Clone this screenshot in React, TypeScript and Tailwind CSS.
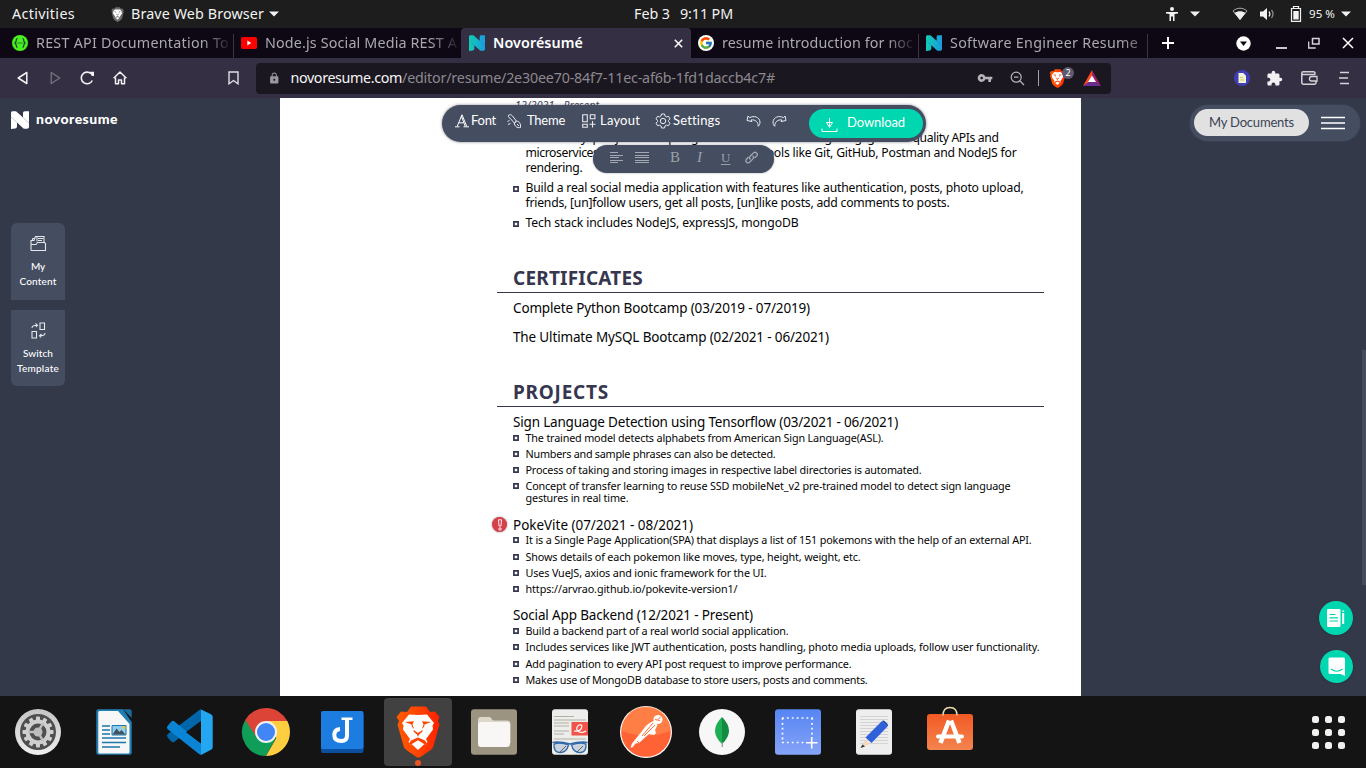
import { useLayoutEffect, useRef, useState } from "react";
import type { ReactNode } from "react";
import { FcGoogle } from "react-icons/fc";
import { MdVpnKey, MdExtension, MdLock } from "react-icons/md";

/* Single line of text tracked so that it spans exactly `w` pixels. */
function Fit({ w, children, className = "" }: { w: number; children: string; className?: string }) {
  const ref = useRef<HTMLSpanElement>(null);
  const [spacing, setSpacing] = useState(0);
  useLayoutEffect(() => {
    const el = ref.current;
    if (!el) return;
    el.style.letterSpacing = "0px";
    const natural = el.getBoundingClientRect().width;
    const next = (w - natural) / children.length;
    el.style.letterSpacing = `${next}px`;
    setSpacing(next);
  }, [w, children]);
  return (
    <span ref={ref} className={`inline-block shrink-0 whitespace-pre ${className}`} style={{ letterSpacing: spacing }}>
      {children}
    </span>
  );
}

function Caret() {
  return (
    <svg width="10" height="6" viewBox="0 0 10 6" className="shrink-0">
      <path d="M0 .5h10L5 5.5z" fill="#f2f2f2" />
    </svg>
  );
}

function Lion({ size, mono = false }: { size: number; mono?: boolean }) {
  return (
    <svg width={size} height={size} viewBox="0 0 52 52" className="shrink-0">
      <defs>
        <linearGradient id="lionGrad" x1="0" x2="1">
          <stop offset="0" stopColor="#ff5a00" />
          <stop offset=".5" stopColor="#ff4500" />
          <stop offset="1" stopColor="#ff2000" />
        </linearGradient>
      </defs>
      <path d="M15 6l4-5.500h15l4 5.500 5-.5 4.500 5.500-1.500 4 1.500 3.500-6 21.500c-1 3-3 4-5 5.500l-8 5.500c-1.500.8-2.500.8-4 0l-8-5.500c-2-1.500-4-2.500-5-5.500L5.500 18.500 7 15l-2.500-4L9 5.500z" fill={mono ? "#6a6a6a" : "url(#lionGrad)"} />
      <path d="M26 9l9-.5 7 8.500-1.500 2.500.5 4-7 9.500 1.500 3-2 2.500-4-2-3.500-1.500-3.500 1.500-4 2-2-2.500 1.500-3-7-9.500.5-4L10 17l7-8.500z" fill="#fff" />
      <path d="M13 16l9-.8-1.500 3 1.500 6 4 2.800 4-2.800 1.500-6-1.500-3 9 .8-6.500 2.500-.5 3-2-.5.5 4.500-3.500 3-1 2.500-1-2.500-3.500-3 .5-4.500-2 .5-.5-3z" fill={mono ? "#777" : "#ff4200"} />
      <path d="M26 33.500l7 4-7 6.500-7-6.500z" fill="#fff" />
      <path d="M17 37.500l2-3 7-3 7 3 2 3-2 1-7-4.200-7 4.200z" fill={mono ? "#777" : "#ff4200"} />
    </svg>
  );
}

function NLogo({ size, white = false }: { size: number; white?: boolean }) {
  return (
    <svg width={size} height={size} viewBox="0 0 18 18" className="shrink-0">
      <defs>
        <linearGradient id="nGrad" x1="0" x2="1">
          <stop offset="0" stopColor="#12cdb2" />
          <stop offset="1" stopColor="#1a9be0" />
        </linearGradient>
      </defs>
      <path
        d="M0 2C0 .6 1 .2 2.200.2h2.800L12 6.500V2.200C12 1 12.600.3 14 .3h4v15.400c0 1.300-.8 2-2 2h-3.200L6 11.500v3.700c0 1.200-.6 2-1.800 2.200L0 18z"
        fill={white ? "#fff" : "url(#nGrad)"}
      />
      <path d="M0 6l6 5.500M12 6.500l6 5.500" stroke={white ? "#8c93a3" : "#1683c8"} strokeWidth=".5" />
    </svg>
  );
}

function TopBar() {
  return (
    <div className="flex h-7 shrink-0 items-center bg-[#1d1d1d] pl-3 text-[14.3px] leading-7 text-[#f2f2f2]">
      <div className="w-[98px]"><Fit w={63}>Activities</Fit></div>
      <Lion size={15} mono />
      <div className="ml-1.5 w-[138px]"><Fit w={133}>Brave Web Browser</Fit></div>
      <Caret />
      <div className="ml-[355px] w-[46px]"><Fit w={36}>Feb 3</Fit></div>
      <Fit w={53}>9:11 PM</Fit>
      <svg width="14" height="16" viewBox="0 0 14 16" className="ml-[432px] shrink-0">
        <circle cx="7" cy="3" r="2" fill="#f2f2f2" />
        <path d="M1 6h12v1.500L9.500 8v7H8v-4.500H6V15H4.500V8L1 7.500z" fill="#f2f2f2" />
      </svg>
      <div className="flex pl-[11px]"><Caret /></div>
      <svg width="16" height="14" viewBox="0 0 16 14" className="ml-8 shrink-0">
        <path d="M1 4C5 .3 11 .3 15 4L8 12.500z" fill="none" stroke="#aaa" />
        <path d="M2.500 6c3.500-2.500 7.500-2.500 11 0L8 13z" fill="#f2f2f2" />
      </svg>
      <svg width="16" height="14" viewBox="0 0 16 14" className="ml-3 shrink-0">
        <path d="M0 4.500h3L7 1v12L3 9.500H0z" fill="#f2f2f2" />
        <path d="M9 4.500q1.700 2.500 0 5" stroke="#f2f2f2" fill="none" strokeWidth="1.300" />
        <path d="M11.500 3q3 4 0 8" stroke="#888" fill="none" strokeWidth="1.300" />
      </svg>
      <svg width="12" height="16" viewBox="0 0 12 16" className="ml-3.5 shrink-0">
        <path d="M3.500 2V.5h5V2M1.500 2.500h9v12.800h-9z" fill="none" stroke="#f2f2f2" strokeWidth="1.200" />
        <path d="M3.300 5h5.400v8.500H3.300z" fill="#f2f2f2" />
      </svg>
      <div className="ml-[7px] w-[32px] text-[11.5px]"><Fit w={26}>95 %</Fit></div>
      <Caret />
    </div>
  );
}

const FADE = "overflow-hidden [mask-image:linear-gradient(to_right,black_86%,rgba(0,0,0,0.12)_100%)]";

function TabStrip() {
  return (
    <div className="flex h-[30px] shrink-0 bg-[#0e0814] text-[14.3px] leading-[30px] text-[#aba9af]">
      <div className="flex w-[234px] items-center pl-3">
        <svg width="16" height="16" viewBox="0 0 16 16" className="shrink-0">
          <circle cx="8" cy="8" r="8" fill="#49f01c" />
          <path d="M5.500 3.500C3.500 3.500 5 7 3 8c2 1 .5 4.500 2.500 4.500M10.500 3.500c2 0 .5 3.500 2.500 4.500-2 1-.5 4.500-2.500 4.500" fill="none" stroke="#173647" strokeWidth="1.200" />
          <path d="M5.500 8h5" stroke="#173647" strokeWidth="1.200" strokeDasharray="1.200 .8" />
        </svg>
        <div className={`ml-2 h-[30px] w-[193px] ${FADE}`}><Fit w={193}>REST API Documentation To</Fit></div>
        <div className="ml-auto h-6 w-px self-end bg-[#3a3541]" />
      </div>
      <div className="flex w-[227px] items-center pl-[7px]">
        <svg width="16" height="12" viewBox="0 0 16 12" className="shrink-0">
          <rect width="16" height="12" rx="2" fill="#f00" />
          <path d="M6.300 3.500v5l4-2.500z" fill="#fff" />
        </svg>
        <div className={`ml-2 h-[30px] w-[192px] ${FADE}`}><Fit w={192}>Node.js Social Media REST A</Fit></div>
      </div>
      <div className="flex w-[230px] items-center rounded-t bg-[#352f44] pl-2 text-white">
        <NLogo size={16} />
        <div className="ml-2 font-semibold"><Fit w={90}>Novorésumé</Fit></div>
        <svg width="9" height="9" viewBox="0 0 9 9" className="mr-2 ml-auto">
          <path d="M.8.8l7.400 7.400M8.200.8L.8 8.200" stroke="#fff" strokeWidth="1.500" />
        </svg>
      </div>
      <div className="flex w-[228px] items-center pl-[7px]">
        <div className="flex size-4 items-center justify-center rounded-full bg-white"><FcGoogle size={14} /></div>
        <div className={`ml-2 h-[30px] w-[191px] ${FADE}`}><Fit w={191}>resume introduction for noc</Fit></div>
        <div className="ml-auto h-6 w-px self-end bg-[#3a3541]" />
      </div>
      <div className="flex w-[229px] items-center pl-[7px]">
        <NLogo size={16} />
        <div className="ml-2 h-[30px] w-[188px] overflow-hidden [mask-image:linear-gradient(to_right,black_90%,rgba(0,0,0,0.6)_100%)]"><Fit w={188}>Software Engineer Resume</Fit></div>
        <div className="ml-auto h-6 w-px self-end bg-[#3a3541]" />
      </div>
      <div className="flex flex-1 items-center">
        <svg width="12" height="12" viewBox="0 0 12 12" className="ml-3.5">
          <path d="M6 0v12M0 6h12" stroke="#fff" strokeWidth="2" />
        </svg>
        <svg width="15" height="15" viewBox="0 0 15 15" className="ml-[62px]">
          <circle cx="7.500" cy="7.500" r="7.200" fill="#fff" />
          <path d="M4 5.500h7l-3.500 4.500z" fill="#0e0814" />
        </svg>
        <svg width="11" height="12" viewBox="0 0 11 12" className="ml-[25px]"><path d="M0 11h11" stroke="#c9c7cc" strokeWidth="2" /></svg>
        <svg width="12" height="12" viewBox="0 0 12 12" className="ml-[21px]">
          <path d="M4.500 1.500h6.500v5.500H4.500z" fill="none" stroke="#d5d3d8" strokeWidth="1.500" />
          <path d="M.7 4.500v6.500h7" fill="none" stroke="#d5d3d8" strokeWidth="1.300" />
        </svg>
        <svg width="12" height="12" viewBox="0 0 12 12" className="ml-[22px]"><path d="M1 1l10 10M11 1L1 11" stroke="#fff" strokeWidth="1.500" /></svg>
      </div>
    </div>
  );
}

function AddressBar() {
  return (
    <div className="flex h-10 shrink-0 items-center bg-[#352f44] pl-[17px]">
      <svg width="11" height="14" viewBox="0 0 11 14"><path d="M9.800 1.500v11L1.200 7z" fill="none" stroke="#f1f0f3" strokeWidth="1.500" strokeLinejoin="round" /></svg>
      <svg width="11" height="14" viewBox="0 0 11 14" className="ml-[22px]"><path d="M1.200 1.500v11L9.800 7z" fill="none" stroke="#77727f" strokeWidth="1.300" strokeLinejoin="round" /></svg>
      <svg width="15" height="14" viewBox="0 0 15 14" className="ml-[19px]">
        <path d="M12.300 9.500A5.800 5.800 0 1 1 11 2.600" fill="none" stroke="#f1f0f3" strokeWidth="1.600" />
        <path d="M9.500.8l4.500 0v4.200l-2.200 0z" fill="#f1f0f3" />
      </svg>
      <svg width="14" height="14" viewBox="0 0 14 14" className="ml-[18px]">
        <path d="M.6 7.300L7 1l6.400 6.300M2.500 6.500v6.300h3V9h3v3.800h3V6.500" fill="none" stroke="#f1f0f3" strokeWidth="1.500" strokeLinejoin="round" />
      </svg>
      <svg width="11" height="14" viewBox="0 0 11 14" className="ml-[101px]"><path d="M1 1h9v11.800L5.500 9.500 1 12.800z" fill="none" stroke="#e0dee3" strokeWidth="1.400" /></svg>
      <div className="ml-[17px] flex h-[31px] w-[855px] items-center rounded bg-[#1b1720] pl-3 text-[14.3px]">
        <MdLock size={12.500} color="#9a989e" />
        <div className="ml-[10px] flex text-[#8b898f]">
          <Fit w={111.500} className="text-[#f5f5f5]">novoresume.com</Fit>
          <Fit w={373}>/editor/resume/2e30ee70-84f7-11ec-af6b-1fd1daccb4c7#</Fit>
        </div>
        <div className="ml-[202px]"><MdVpnKey size={16} color="#b5b3b9" /></div>
        <svg width="15" height="15" viewBox="0 0 15 15" className="ml-[17px]">
          <circle cx="6.200" cy="6.200" r="5" fill="none" stroke="#b5b3b9" strokeWidth="1.200" />
          <path d="M9.800 9.800L14 14M4 6.200h4.400" stroke="#b5b3b9" strokeWidth="1.300" />
        </svg>
        <div className="ml-[13px] h-4 w-px bg-[#a5a2aa]" />
        <div className="relative ml-[9px] flex w-[26px]">
          <Lion size={19} />
          <span className="absolute -top-0.5 left-[14px] flex size-3 items-center justify-center rounded-full bg-[#5d5a70] text-[9px] leading-none text-white">2</span>
        </div>
        <svg width="18" height="16" viewBox="0 0 18 16" className="ml-[9px]">
          <path d="M9 0L0 16l9-5z" fill="#ff4724" />
          <path d="M9 0l9 16-9-5z" fill="#9e1f63" />
          <path d="M0 16h18l-9-6z" fill="#662d91" />
          <path d="M9 5.500l4 6.500H5z" fill="#fff" />
        </svg>
      </div>
      <svg width="16" height="16" viewBox="0 0 16 16" className="ml-[123px]">
        <circle cx="8" cy="8" r="8" fill="#403eb5" />
        <path d="M4.500 3h4.800L12 5.700V13H4.500z" fill="#f4f3d8" />
        <path d="M6 7.500h3M6 10h4.500" stroke="#c8cf4a" strokeWidth="1.200" />
      </svg>
      <div className="ml-[16px]"><MdExtension size={17} color="#f1f0f3" /></div>
      <svg width="17" height="14" viewBox="0 0 17 14" className="ml-[18px]">
        <path d="M14 3.500V2.200c0-.8-.5-1.400-1.400-1.400H2.200C1.300.8.800 1.400.8 2.200v9.600c0 .9.600 1.400 1.400 1.400h11.400c.8 0 1.400-.5 1.400-1.400V10M1 3.600h13.300" fill="none" stroke="#d5d3d8" strokeWidth="1.500" />
        <path d="M16 5.500h-5.300a1.800 1.800 0 0 0 0 4.500H16z" fill="none" stroke="#d5d3d8" strokeWidth="1.300" />
      </svg>
      <svg width="10" height="14" viewBox="0 0 10 14" className="ml-[21px]"><path d="M1 1.500h9M0 7h9M1 12.500h9" stroke="#d5d3d8" strokeWidth="1.300" /></svg>
    </div>
  );
}

function Sidebar() {
  return (
    <aside className="w-[280px] shrink-0 bg-[#333949] pt-[13px] pl-[11px] font-[Lato,sans-serif] text-[10px] leading-[15px] font-medium text-white">
      <div className="flex h-[18px] items-center gap-[7px]">
        <NLogo size={18} white />
        <div className="-mt-[3px] text-[14px] font-black"><Fit w={82}>novoresume</Fit></div>
      </div>
      <div className="mt-[94px] flex h-[77px] w-[54px] flex-col items-center rounded-t-md bg-[#454d61] pt-3">
        <svg width="17" height="17" viewBox="0 0 17 17" className="mb-[7px]">
          <path d="M1 15.500V5.500h3l1.500-4h8.500V7M1 15.500h14.500v-7l-1-1h-7L6 9.500H1" fill="none" stroke="#e4e6ea" strokeWidth="1.100" />
          <path d="M7 1.500v5M8 3.500h5M8 5.500h4M2.500 5V3.500h2" stroke="#e4e6ea" strokeWidth="1" fill="none" />
        </svg>
        <Fit w={14}>My</Fit>
        <Fit w={37}>Content</Fit>
      </div>
      <div className="mt-2.5 flex h-[76px] w-[54px] flex-col items-center rounded-b-md bg-[#454d61] pt-3">
        <svg width="15" height="17" viewBox="0 0 15 17" className="mb-[7px]">
          <path d="M9 1h4.500v6.500H9zM1 9.500h4.500V16H1zM1 6c0-2.500 2-2.800 5-2.800M4.500 1.500L6.500 3.200 5 5M14 11c0 2.500-2 2.800-5 2.800M10.500 12l-2 1.800 1.500 1.700" fill="none" stroke="#e4e6ea" strokeWidth="1.100" />
        </svg>
        <Fit w={30}>Switch</Fit>
        <Fit w={42}>Template</Fit>
      </div>
    </aside>
  );
}

function Bullet({ lines, big = false, className }: { lines: [number, string][]; big?: boolean; className: string }) {
  return (
    <li className={`flex gap-1.5 ${className}`}>
      <svg width="6" height="6" viewBox="0 0 6 6" className={`shrink-0 ${big ? "mt-[6px]" : "mt-[3px]"}`}>
        <path d="M.9.9h4.200v4.200H.9z" fill="#fff" stroke="#36364f" strokeWidth="1.700" />
      </svg>
      <div className={`ml-[.5px] flex flex-col items-start text-[#050505] ${big ? "text-[12.2px] leading-[15px]" : "text-[10.8px] leading-3"}`}>
        {lines.map(([w, t]) => <Fit key={t} w={w}>{t}</Fit>)}
      </div>
    </li>
  );
}

function Heading({ w, children, className }: { w: number; children: string; className: string }) {
  return (
    <h2 className={`-ml-4 h-[27px] w-[547px] border-b border-[#36364f] pl-4 text-[19px] leading-[25px] font-bold text-[#36364f] ${className}`}>
      <Fit w={w}>{children}</Fit>
    </h2>
  );
}

function Title({ w, children, className = "" }: { w: number; children: string; className?: string }) {
  return <div className={`flex h-4 text-[13.5px] leading-4 text-[#050505] ${className}`}><Fit w={w}>{children}</Fit></div>;
}

function Resume() {
  return (
    <article className="w-[801px] shrink-0 overflow-hidden bg-white pl-[233px]">
      <div className="mt-px h-3 pl-0.5 text-[10.5px] leading-3 text-[#45455d] italic"><Fit w={84}>12/2021 - Present</Fit></div>
      <div className="mt-[19px] ml-[12.5px] w-[491px] text-[12.2px] leading-[15px] text-[#050505]">
        <div className="flex h-[15px] w-[473px] justify-between">
          <Fit w={380}>Currently projects in progress based on designing good </Fit>
          <Fit w={86}>quality APIs and</Fit>
        </div>
        <div className="flex h-[15px] justify-between">
          <Fit w={73}>microservices</Fit>
          <Fit w={254}>tools like Git, GitHub, Postman and NodeJS for</Fit>
        </div>
        <div className="h-[15px]"><Fit w={57}>rendering.</Fit></div>
      </div>
      <ul>
        <Bullet big className="mt-[5px]" lines={[[498, "Build a real social media application with features like authentication, posts, photo upload,"], [424, "friends, [un]follow users, get all posts, [un]like posts, add comments to posts."]]} />
        <Bullet big className="mt-[5px]" lines={[[273, "Tech stack includes NodeJS, expressJS, mongoDB"]]} />
      </ul>
      <Heading w={130} className="mt-9">CERTIFICATES</Heading>
      <Title w={297} className="mt-[7px]">Complete Python Bootcamp (03/2019 - 07/2019)</Title>
      <Title w={316} className="mt-[13px]">The Ultimate MySQL Bootcamp (02/2021 - 06/2021)</Title>
      <Heading w={96} className="mt-[35px]">PROJECTS</Heading>
      <Title w={385} className="mt-[7px]">Sign Language Detection using Tensorflow (03/2021 - 06/2021)</Title>
      <ul>
        <Bullet className="mt-0.5" lines={[[358, "The trained model detects alphabets from American Sign Language(ASL)."]]} />
        <Bullet className="mt-1" lines={[[250, "Numbers and sample phrases can also be detected."]]} />
        <Bullet className="mt-1" lines={[[396, "Process of taking and storing images in respective label directories is automated."]]} />
        <Bullet className="mt-1" lines={[[485, "Concept of transfer learning to reuse SSD mobileNet_v2 pre-trained model to detect sign language"], [103, "gestures in real time."]]} />
      </ul>
      <div className="relative mt-[13px]">
        <span className="absolute top-0 -left-[21px] flex size-[15px] items-center justify-center rounded-full bg-[#d6404a] shadow-[0_0_2px_rgba(0,0,0,.5)]">
          <svg width="6" height="12" viewBox="0 0 6 12">
            <path d="M1.500.8h3L4 7H2z" fill="none" stroke="#fff" strokeWidth=".9" />
            <circle cx="3" cy="10" r="1.200" fill="none" stroke="#fff" strokeWidth=".9" />
          </svg>
        </span>
        <Title w={180}>PokeVite (07/2021 - 08/2021)</Title>
      </div>
      <ul>
        <Bullet className="mt-px" lines={[[506, "It is a Single Page Application(SPA) that displays a list of 151 pokemons with the help of an external API."]]} />
        <Bullet className="mt-[5px]" lines={[[335, "Shows details of each pokemon like moves, type, height, weight, etc."]]} />
        <Bullet className="mt-1" lines={[[241, "Uses VueJS, axios and ionic framework for the UI."]]} />
        <Bullet className="mt-1" lines={[[212, "https://arvrao.github.io/pokevite-version1/"]]} />
      </ul>
      <Title w={240} className="mt-3">Social App Backend (12/2021 - Present)</Title>
      <ul>
        <Bullet className="mt-0.5" lines={[[263, "Build a backend part of a real world social application."]]} />
        <Bullet className="mt-1" lines={[[514, "Includes services like JWT authentication, posts handling, photo media uploads, follow user functionality."]]} />
        <Bullet className="mt-[5px]" lines={[[326, "Add pagination to every API post request to improve performance."]]} />
        <Bullet className="mt-1" lines={[[342, "Makes use of MongoDB database to store users, posts and comments."]]} />
      </ul>
    </article>
  );
}

function EditorBar() {
  return (
    <div className="absolute top-[7px] left-[442px] flex h-[37px] w-[484px] items-center rounded-full bg-[#454d61] pl-[13px] font-[Lato,sans-serif] text-[13px] text-white shadow-[0_0_3px_rgba(40,45,60,.6)]">
      <div className="-mt-[5px] flex items-center">
        <svg width="14" height="14" viewBox="0 0 14 14">
          <path d="M7 .8L2.300 12M6.800 3.200l3.400 9M7 .8l4.700 11.400M3.700 8.800h5M0 12.800h4.500M8.500 12.800H14M7 1l-1 3" fill="none" stroke="#fff" strokeWidth="1" />
        </svg>
        <div className="ml-0.5 w-[36px]"><Fit w={25}>Font</Fit></div>
        <svg width="15" height="15" viewBox="0 0 15 15">
          <path d="M1.500 1.200C3 .4 4.500.6 5.500 2l4 5.200-2.200 1.800L3 4.200C1.800 3.500 1 2.500 1.500 1.200zM7.300 9l2.200-1.800c2.500-.2 4.500 2.300 4 6.300C10 14.300 7.500 12 7.300 9zM.5 7.500l2-1M1 10.500l2.500-1M10 10l2 2" fill="none" stroke="#e8eaee" strokeWidth="1" />
        </svg>
        <div className="ml-[5px] w-[55px]"><Fit w={38}>Theme</Fit></div>
        <svg width="14" height="14" viewBox="0 0 14 14">
          <path d="M.7.7h4.600v7H.7zM8.300.7h4.600v4H8.300zM.7 10.200h4.600v3H.7zM10.500 7v6.500M7.500 10.200h6" fill="none" stroke="#e8eaee" strokeWidth="1.100" />
        </svg>
        <div className="ml-1 w-[55px]"><Fit w={40}>Layout</Fit></div>
        <svg width="16" height="16" viewBox="0 0 16 16">
          <path d="M6.500 1h3l.5 2 1.500.9 2-.6L15 5.900l-1.500 1.500v1.200L15 10.100l-1.500 2.600-2-.6-1.500.9-.5 2h-3L6 13l-1.500-.9-2 .6L1 10.100l1.500-1.500V7.400L1 5.900l1.500-2.600 2 .6L6 3z" fill="none" stroke="#e8eaee" strokeWidth="1" />
          <circle cx="8" cy="8" r="2.700" fill="none" stroke="#e8eaee" strokeWidth="1" />
        </svg>
        <div className="ml-0.5 w-[73px]"><Fit w={47}>Settings</Fit></div>
        <UndoIcon />
        <div className="ml-[11px] -scale-x-100"><UndoIcon /></div>
      </div>
      <div className="ml-[22px] -mt-px flex h-[29px] w-[114px] items-center rounded-full bg-[#00d6af] pl-3">
        <svg width="17" height="15" viewBox="0 0 17 15" className="mt-1">
          <path d="M1 10.500v3h15v-3M8.500 0v8M5.500 4.500h6L8.500 9.500z" fill="none" stroke="#fff" strokeWidth="1" />
        </svg>
        <div className="-mt-px ml-[9px] flex"><Fit w={58}>Download</Fit></div>
      </div>
    </div>
  );
}

function UndoIcon() {
  return (
    <svg width="15" height="12" viewBox="0 0 15 12">
      <path d="M1 5.500L2 1l1.500 1.700C8 .2 13.500 2 14 7c0 2-.8 3.300-1.800 4.300C12.500 7 9 4.200 5 5l1 1.500z" fill="none" stroke="#e8eaee" strokeWidth="1" strokeLinejoin="round" />
    </svg>
  );
}

function FormatBar() {
  return (
    <div className="absolute top-[47px] left-[593px] flex h-[28px] w-[181px] items-center rounded-full bg-[#454d61] pl-[17px] font-['Liberation_Serif',serif] text-[#9ba0ab] shadow-[0_0_2px_rgba(40,45,60,.5)]">
      <svg width="13" height="12" viewBox="0 0 13 12" className="-mt-[3px]"><path d="M0 .5h8M0 3.500h13M0 5.500h9M0 8.500h13M0 10.500h8" stroke="#a3a8b2" /></svg>
      <svg width="14" height="12" viewBox="0 0 14 12" className="-mt-[3px] ml-3"><path d="M0 .5h14M0 3.500h14M0 5.500h14M0 8.500h14M0 10.500h14" stroke="#a3a8b2" /></svg>
      <span className="-mt-1 ml-[21px] w-[25px] text-[15px] leading-none">B</span>
      <span className="-mt-1 w-[26px] pl-0.5 text-[15px] leading-none italic">I</span>
      <span className="-mt-1 w-[24px] text-[13px] leading-none underline underline-offset-2">U</span>
      <svg width="13" height="13" viewBox="0 0 13 13" className="-mt-[3px]">
        <path d="M5.500 8.500C3.500 7 5 5.500 6 4.300L8.500 2c2-2 5 .8 3.300 2.800L9.500 7M7.500 4.700c2 1.300.6 3-.5 4.200L4.500 11.300c-2 1.700-4.800-1-3-3L3.500 6" fill="none" stroke="#a3a8b2" strokeWidth="1.300" />
      </svg>
    </div>
  );
}

function RightRail() {
  return (
    <aside className="flex flex-1 flex-col items-end bg-[#333949] pt-[7px]">
      <div className="mr-1.5 flex h-9 w-[170px] items-center rounded-full bg-[#454d61] pl-1 shadow-[0_0_3px_rgba(69,77,97,.9)]">
        <div className="-mt-px flex h-[27px] w-[115px] items-center justify-center rounded-full bg-[#e1e1e1] font-[Lato,sans-serif] text-[13px] text-[#3b4256]"><Fit w={85}>My Documents</Fit></div>
        <svg width="24" height="14" viewBox="0 0 24 14" className="-mt-px ml-3"><path d="M0 1.500h24M0 7h24M0 12.500h24" stroke="#fff" strokeWidth="1.500" /></svg>
      </div>
      <div className="mt-[209px] h-[235px] w-1 bg-[#454b5b]" />
      <div className="mt-[16px] mr-[13px] flex size-[34px] items-center justify-center rounded-full bg-[#00d6af] shadow">
        <svg width="18" height="18" viewBox="0 0 18 18">
          <rect x="0" y="0" width="13.500" height="18" rx="1" fill="#fff" />
          <path d="M2.500 5.500h6M2.500 8.800h8.500M2.500 12h8.500" stroke="#00d6af" strokeWidth="1.200" />
          <path d="M15.200 1.500h2v1.300h-2zM15.200 4h2v11h-2z" fill="#fff" />
        </svg>
      </div>
      <div className="mt-[15px] mr-[13px] flex size-[33px] items-center justify-center rounded-full bg-[#00d6af] shadow">
        <svg width="18" height="19" viewBox="0 0 18 19">
          <path d="M2 .5h13.500c.8 0 1.500.7 1.500 1.500v17l-4.500-2H2C1 17 .5 16.200.5 15.500V2C.5 1.200 1.200.5 2 .5z" fill="#fff" />
          <path d="M3 12q5.700 4.500 11.500 0" fill="none" stroke="#00d6af" strokeWidth="1.200" />
        </svg>
      </div>
    </aside>
  );
}

const gearTeeth = Array.from({ length: 12 }, (_, i) => i * 30);

const dockIcons: ReactNode[] = [
  <>
    <defs><linearGradient id="setG" x2="0" y2="1"><stop stopColor="#c4c4c4" /><stop offset="1" stopColor="#efefef" /></linearGradient></defs>
    <circle cx="26" cy="26" r="23" fill="url(#setG)" />
    <circle cx="26" cy="26" r="18" fill="#4f4f4f" />
    {gearTeeth.map((a) => <rect key={a} x="24" y="10.500" width="4" height="5" rx=".8" fill="#cfcfcf" transform={`rotate(${a} 26 26)`} />)}
    <circle cx="26" cy="26" r="10.500" fill="none" stroke="#cfcfcf" strokeWidth="4" />
    <circle cx="26" cy="26" r="4.500" fill="#bdbdbd" />
    <path d="M26 26L16 26M26 26l5-9M26 26l5 9" stroke="#bdbdbd" strokeWidth="2.500" />
  </>,
  <>
    <path d="M10.500 3.300H35l8.700 13V46.500q0 2.200-2.200 2.200h-31q-2.200 0-2.200-2.200v-41q0-2.200 2.200-2.200z" fill="#2180b3" />
    <path d="M11.500 5H30l11.500 13v28q0 1.500-1.500 1.500H11.500q-1.200 0-1.200-1.500V6.500Q10.300 5 11.500 5z" fill="#f7f7f7" />
    <path d="M35 3.300h6.500q2.200 0 2.200 2.200V12z" fill="#1d6ea0" />
    <path d="M14 20h8M14 24h8M14 28h8M14 32h24M14 36.500h24M14 41h18" stroke="#1b78ab" strokeWidth="1.700" />
    <path d="M24 19.500h14v9.500H24z" fill="#8ccdf0" stroke="#1b78ab" strokeWidth="1" />
    <path d="M24.500 28.500l4-6 3 3.500 2-2 4 4.500z" fill="#43525c" /><circle cx="36" cy="21.500" r="1.500" fill="#f1c52c" />
  </>,
  <>
    <path d="M3.500 31l4 4.500q1.500 1.300 3 0L37 14V3.300z" fill="#0065a9" />
    <path d="M3.500 31q-1-1.500 0-2.700L35 4.200q1-.9 2-.9V15L10.500 35.500q-1.500 1.300-3 0z" fill="#0065a9" />
    <path d="M3.500 20l4-4.500q1.500-1.300 3 0L37 37.500V49l-2-1L3.500 23q-1.300-1.300 0-3z" fill="#0a84d4" />
    <path d="M37 3.500l10 4.700q1.700 1 1.700 2.800v30q0 1.900-1.700 2.800L37 49z" fill="#24a7f0" />
    <path d="M22 26.200L37 15v22.500z" fill="#141414" />
  </>,
  <>
    <path d="M26 26L5.200 14A24 24 0 0 0 26 50l10-18z" fill="#0f9d58" />
    <path d="M26 15h21.300A24 24 0 0 1 26 50l10.300-18z" fill="#ffcd40" />
    <path d="M5.200 14A24 24 0 0 1 47.300 15H26l-9.700 16z" fill="#db4437" />
    <circle cx="26" cy="26" r="11" fill="#f1f1f1" /><circle cx="26" cy="26" r="9" fill="#4285f4" />
  </>,
  <>
    <rect x="5" y="7" width="42.500" height="40" rx="2" fill="#0b4f9e" />
    <rect x="5" y="5" width="42.500" height="38" rx="2" fill="#1d7ce0" />
    <path d="M31 13v16.500q0 5.500-5.500 5.500-7.200 0-7.200-6 0-5.500 5.700-6" fill="none" stroke="#fff" strokeWidth="4" />
    <path d="M25.500 11.500h11V14h-11z" fill="#fff" />
  </>,
  null,
  <>
    <rect x="3" y="3.300" width="46" height="45.500" rx="3" fill="#9b9480" />
    <path d="M10 14q0-3 3-3h9l3 3.500h14q3.500 0 3.500 3V37H10z" fill="#dcd8ca" />
    <rect x="10" y="16" width="32" height="25" rx="3" fill="#f8f7f5" />
  </>,
  <>
    <rect x="8" y="3.300" width="36" height="45.500" rx="3" fill="#ededeb" />
    <path d="M10 10.500h20M10 14h32M10 17h15M10 20h15M10 25h15M10 28h10M10 33h32" stroke="#b3b1a3" strokeWidth="1.200" />
    <rect x="27.500" y="16" width="16.500" height="13.500" fill="#f25449" />
    <path d="M30 25q6 1 7.500-3t-2.500-3q-4 3-1 6t8 0" fill="none" stroke="#fff" strokeWidth="1.200" />
    <path d="M10 38q7-2 14.500 1-2 8-9 7.500-6-.5-5.500-8.500zM42 38q-7-2-14.500 1 2 8 9 7.500 6-.5 5.500-8.500z" fill="#c9d3de" stroke="#3269a9" strokeWidth="1.300" />
    <path d="M8.500 36.500q8-1 17.500 1.500 9.500-2.500 17.500-1.500" fill="none" stroke="#3269a9" strokeWidth="1.700" />
    <path d="M16 46l6-6M33 46l6-6" stroke="#444" strokeWidth=".8" />
  </>,
  <>
    <circle cx="26" cy="26" r="26" fill="#fff" /><circle cx="26" cy="26" r="24.800" fill="#ff6234" />
    <path d="M1.500 25A24.500 24.500 0 0 1 50.500 25q-24 9-49 0z" fill="#ff8a4d" opacity=".7" />
    <circle cx="38" cy="13.500" r="4.500" fill="#fff" /><path d="M38 13.500l3-3M35 13.500l5 1" stroke="#ff6c37" />
    <path d="M34 15q3 2 3.500 4l-2.500 5 1 3-2 2-5-1-10 9-3.500.5-3 4h-2l1.500-4 12-15q4-6 10-7.500z" fill="#fff" />
    <path d="M33 17L22 30M35 19L24 30M17 35l3 3" stroke="#ff7238" strokeWidth="1" />
  </>,
  <>
    <circle cx="26" cy="26" r="23" fill="#f7f7f7" />
    <path d="M26 11Q12 25 26 38z" fill="#1fae54" /><path d="M26 11Q40 25 26 38z" fill="#118c41" />
    <path d="M26.300 36v5" stroke="#82988b" strokeWidth="1.200" />
  </>,
  <>
    <defs><linearGradient id="shotG" x2="0" y2="1"><stop stopColor="#5685f2" /><stop offset="1" stopColor="#85a3f8" /></linearGradient></defs>
    <rect x="3" y="3.300" width="46" height="45.500" rx="3" fill="url(#shotG)" />
    <path d="M10 12h31M10 36.500h23M10.500 12v25M40 12v18" fill="none" stroke="#fff" strokeWidth="1.700" strokeDasharray="1.800 3.100" />
    <path d="M39.700 31v11.500M34 36.700h11.500" stroke="#fff" strokeWidth="1.600" />
  </>,
  <>
    <rect x="8" y="3.300" width="36" height="45.500" rx="3" fill="#eee" />
    <path d="M12 10.500h28M12 13.500h28M12 16.500h28M12 19.500h28M12 22.500h28M12 25.500h28M12 28.500h28M12 31.500h28M12 34.500h28M12 37.500h28" stroke="#cbcbcb" strokeWidth=".8" />
    <path d="M17 34l5 4-9.500 4z" fill="#f5d8ba" /><path d="M14.500 38.500l2.500 2-4.500 1.500z" fill="#333" />
    <path d="M17.500 31.500L34 15l5.500 5.500L23.500 37z" fill="#2e61da" /><path d="M34 15q1.500-1 3 .5l2.500 2.500q1 1.300 0 2.500z" fill="#1c45a8" />
  </>,
  <>
    <defs><linearGradient id="softG" x2="0" y2="1"><stop stopColor="#f25a24" /><stop offset="1" stopColor="#f4844f" /></linearGradient></defs>
    <rect x="3" y="8" width="46" height="36" rx="3" fill="url(#softG)" />
    <path d="M19 9.500q0-8 7-8t7 8" fill="none" stroke="#efd9ac" strokeWidth="1.500" />
    <path d="M25 14.500L16.500 37M27 14.500L35.500 37" stroke="#fff" strokeWidth="4.500" />
    <path d="M14 30.500h24" stroke="#fff" strokeWidth="4" strokeLinecap="round" />
  </>,
];

function Dock() {
  return (
    <div className="flex h-[72px] shrink-0 items-center bg-[#141414]">
      {dockIcons.map((icon, i) =>
        icon === null ? (
          <div key={i} className="relative flex h-[68px] w-[76px] items-center justify-center">
            <div className="flex h-[68px] w-[68px] items-center justify-center rounded bg-[#414141]"><Lion size={52} /></div>
            <span className="absolute bottom-0 left-[35px] size-1.5 rounded-full bg-[#e95420]" />
          </div>
        ) : (
          <div key={i} className="flex w-[76px] justify-center"><svg width="52" height="52" viewBox="0 0 52 52">{icon}</svg></div>
        ),
      )}
      <div className="mr-[21px] ml-auto grid grid-cols-3 gap-1.5">
        {[0, 1, 2, 3, 4, 5, 6, 7, 8].map((n) => <span key={n} className="size-[7px] rounded-[2.5px] bg-[#f0f0ee]" />)}
      </div>
    </div>
  );
}

export default function App() {
  return (
    <div className="flex h-[768px] w-[1366px] flex-col overflow-hidden font-['Noto_Sans',sans-serif]">
      <TopBar />
      <TabStrip />
      <AddressBar />
      <main className="relative flex h-[598px] shrink-0">
        <Sidebar />
        <Resume />
        <RightRail />
        <FormatBar />
        <EditorBar />
      </main>
      <Dock />
    </div>
  );
}
